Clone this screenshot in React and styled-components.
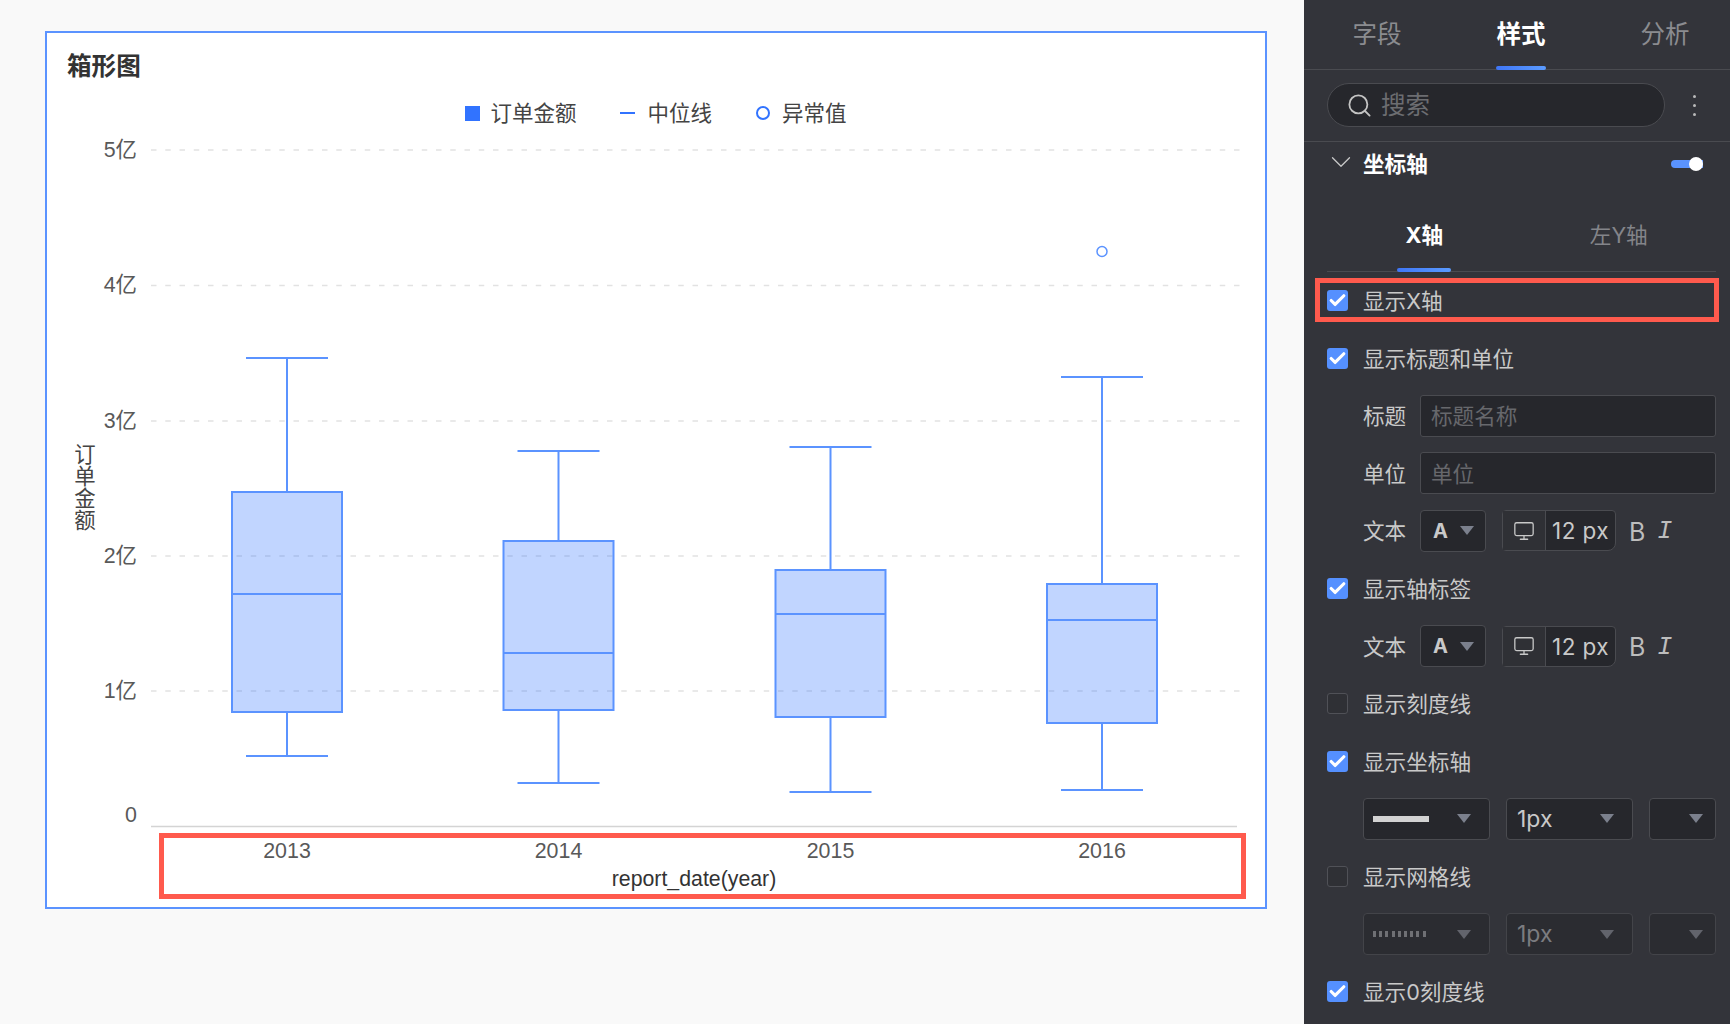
import React from "react";
import styled, { createGlobalStyle } from "styled-components";
import { Search, ChevronDown, Monitor, Check } from "lucide-react";

const FONT = `"Liberation Sans", "Noto Sans CJK SC", sans-serif`;
const UI_FONT = `Inter, "Noto Sans CJK SC", sans-serif`;

const GlobalStyle = createGlobalStyle`
  html, body { margin: 0; padding: 0; background: #f9f9f9; }
  * { box-sizing: border-box; }
`;

const Page = styled.div`
  display: flex;
  width: 1730px;
  height: 1024px;
  overflow: hidden;
  font-family: ${UI_FONT};
`;

const Main = styled.main`
  flex: 1;
  padding: 31px 37px 0 45px;
`;

// chart card
const Card = styled.section`
  position: relative;
  display: flex;
  flex-direction: column;
  height: 878px;
  background: #fff;
  border: 2px solid #5b93ff;
  font-family: ${FONT};
`;

const CardTitle = styled.h1`
  margin: 21px 0 0 20px;
  font-size: 24.6px;
  line-height: 26px;
  font-weight: 700;
  color: #333;
`;

const Legend = styled.div`
  display: flex;
  justify-content: center;
  align-items: center;
  height: 24px;
  margin-top: 21px;
  font-size: 21.5px;
  color: #444;
`;

const LegendItem = styled.div`
  display: flex;
  align-items: center;
  gap: ${(p) => p.$inner || 12}px;
  margin-right: ${(p) => p.$gap || 0}px;

  span {
    padding-bottom: 3px;
  }
`;

const LegendSquare = styled.i`
  width: 15px;
  height: 15px;
  background: #3173ff;
`;

const LegendDash = styled.i`
  width: 15px;
  height: 2px;
  background: #3173ff;
`;

const LegendCircle = styled.i`
  width: 14px;
  height: 14px;
  border: 2px solid #3173ff;
  border-radius: 50%;
`;

const ChartSvg = styled.svg`
  display: block;
  width: 1218px;
  height: 782px;
  font-family: ${FONT};
`;

const RedBox = styled.div`
  position: absolute;
  left: 112px;
  top: 800px;
  width: 1087px;
  height: 66px;
  border: 5px solid #ff5a4d;
`;

// settings panel
const Panel = styled.aside`
  width: 426px;
  height: 1024px;
  background: #33343a;
  color: #c9c9c9;
  font-size: 21.6px;
  overflow: hidden;
`;

const TopTabs = styled.nav`
  display: grid;
  grid-template-columns: repeat(3, 144px);
  height: 70px;
  padding-left: 1px;
  border-bottom: 1px solid #4a4b50;
`;

const TopTab = styled.div`
  position: relative;
  display: flex;
  justify-content: center;
  padding-top: 19px;
  font-size: 24.5px;
  line-height: 30px;
  font-weight: ${(p) => (p.$active ? 600 : 400)};
  color: ${(p) => (p.$active ? "#fff" : "#8b8c90")};

  ${(p) =>
    p.$active &&
    `&::after {
      content: "";
      position: absolute;
      left: 47px;
      bottom: -1px;
      width: 50px;
      height: 4px;
      border-radius: 2px;
      background: linear-gradient(90deg, #3f76f6, #5b9bff);
    }`}
`;

const SearchRow = styled.div`
  display: flex;
  align-items: center;
  height: 72px;
  padding: 0 0 1px 23px;
  border-bottom: 1px solid #4a4b50;
`;

const SearchBox = styled.div`
  display: flex;
  align-items: center;
  gap: 8px;
  width: 338px;
  height: 44px;
  padding-left: 18px;
  background: #26272c;
  border: 1px solid #4a4b50;
  border-radius: 22px;
  font-size: 24.5px;
  color: #6c6d71;

  span {
    padding-bottom: 3px;
  }
`;

const MoreDots = styled.div`
  display: flex;
  flex-direction: column;
  gap: 6px;
  margin-left: 28px;
`;

const Dot = styled.i`
  width: 3px;
  height: 3px;
  border-radius: 50%;
  background: #b9b9b9;
`;

const SectionHead = styled.div`
  display: flex;
  align-items: center;
  height: 44px;
  padding-left: 19.5px;
  color: #fff;
  font-weight: 600;
`;

const SectionChevron = styled(ChevronDown)`
  margin-bottom: 4px;
  color: #c9c9c9;
`;

const SectionTitle = styled.span`
  margin-left: 5.5px;
  padding-bottom: 4px;
  flex: 1;
`;

const Toggle = styled.div`
  position: relative;
  width: 32px;
  height: 8px;
  margin-right: 27px;
  border-radius: 4px 0 0 4px;
  background: #5a93ff;

  &::after {
    content: "";
    position: absolute;
    right: 0;
    top: -3px;
    width: 14px;
    height: 14px;
    border-radius: 50%;
    background: #fff;
  }
`;

const SubTabs = styled.div`
  display: grid;
  grid-template-columns: 1fr 1fr;
  height: 86px;
  width: 389px;
  margin-left: 23px;
  border-bottom: 1px solid #4a4b50;
`;

const SubTab = styled.div`
  position: relative;
  display: flex;
  justify-content: center;
  padding-top: 35px;
  line-height: 28px;
  font-weight: ${(p) => (p.$active ? 700 : 400)};
  color: ${(p) => (p.$active ? "#fff" : "#84858a")};

  ${(p) =>
    p.$active &&
    `&::after {
      content: "";
      position: absolute;
      left: 70px;
      bottom: -1px;
      width: 54px;
      height: 4px;
      border-radius: 2px;
      background: linear-gradient(90deg, #3f76f6, #5b9bff);
    }`}
`;

const Options = styled.div`
  display: flex;
  flex-direction: column;
  gap: 15.6px;
  padding: 7.5px 14px 0 23px;
`;

const OptionRow = styled.div`
  position: relative;
  display: flex;
  align-items: center;
  height: 42px;
  flex-shrink: 0;
  padding-left: ${(p) => p.$indent || 0}px;
`;

const Highlight = styled.div`
  position: absolute;
  left: -12px;
  right: -3px;
  top: -1.5px;
  bottom: -0.5px;
  border: 5px solid #ff5a4d;
`;

const CheckMark = styled.div`
  display: flex;
  align-items: center;
  justify-content: center;
  width: 21px;
  height: 21px;
  margin-right: 15px;
  border-radius: 3px;
  background: ${(p) => (p.$on ? "#5590ff" : "#2f3035")};
  border: ${(p) => (p.$on ? "none" : "1px solid #505157")};
  color: #fff;
`;

const RowText = styled.span`
  padding-bottom: 2px;
`;

const FieldLabel = styled.span`
  width: 57px;
  flex-shrink: 0;
  padding-bottom: 2px;
`;

const TextInput = styled.div`
  display: flex;
  align-items: center;
  flex: 1;
  height: 42px;
  padding: 0 0 2px 10px;
  background: #26272c;
  border: 1px solid #4a4b50;
  border-radius: 3px;
  color: #67686c;
`;

const Select = styled.div`
  display: flex;
  align-items: center;
  justify-content: space-between;
  width: ${(p) => p.$w}px;
  height: 42px;
  padding: 0 ${(p) => p.$pr}px 0 ${(p) => p.$pl}px;
  margin-right: ${(p) => p.$mr || 0}px;
  background: ${(p) => (p.$off ? "#2b2c31" : "#26272c")};
  border: 1px solid ${(p) => (p.$off ? "#434449" : "#4a4b50")};
  border-radius: 4px;
  color: ${(p) => (p.$off ? "#7b7c80" : "#c9c9c9")};
`;

const SelectValue = styled.span`
  font-size: 23px;
`;

const Caret = styled.i`
  width: 0;
  height: 0;
  border-left: 7.5px solid transparent;
  border-right: 7.5px solid transparent;
  border-top: 9px solid ${(p) => (p.$off ? "#62646c" : "#7b808d")};
`;

const FontLetter = styled.b`
  font-size: 20px;
  font-weight: 700;
`;

const LineSwatch = styled.i`
  width: 56px;
  height: 6px;
  background: ${(p) =>
    p.$dotted
      ? "repeating-linear-gradient(90deg, #6f7074 0 3px, transparent 3px 6.2px)"
      : "#d2d2d2"};
`;

const SizeGroup = styled.div`
  display: flex;
  width: 114px;
  height: 41px;
  margin-right: 13px;
  background: #26272c;
  border: 1px solid #4a4b50;
  border-radius: 4px 4px 8px 4px;
`;

const SizeIcon = styled.div`
  display: flex;
  align-items: center;
  justify-content: center;
  width: 43px;
  background: #2f3035;
  border-right: 1px solid #4a4b50;
  color: #c9c9c9;
`;

const SizeValue = styled.div`
  flex: 1;
  display: flex;
  align-items: center;
  justify-content: center;
  font-size: 22.5px;
  letter-spacing: 0.4px;
  white-space: pre;
`;

const StyleLetter = styled.span`
  font-size: 25px;
  margin-right: 12px;
  padding-top: 2px;
  color: #bdbdbd;
`;

const ItalicLetter = styled(StyleLetter)`
  font-family: "Liberation Mono", monospace;
  font-style: italic;
`;

// page coordinates of the chart, the svg begins at (47, 125)
const ORIGIN_X = 47;
const ORIGIN_Y = 125;
const TICKS = [
  { label: "5亿", y: 150 },
  { label: "4亿", y: 285.5 },
  { label: "3亿", y: 421 },
  { label: "2亿", y: 556 },
  { label: "1亿", y: 691 },
];
const BOXES = [
  { year: 2013, x: 287, hi: 358, top: 492, mid: 594, bottom: 712, lo: 756 },
  { year: 2014, x: 558.5, hi: 451, top: 541, mid: 653, bottom: 710, lo: 783 },
  { year: 2015, x: 830.5, hi: 447, top: 570, mid: 614, bottom: 717, lo: 792 },
  { year: 2016, x: 1102, hi: 377, top: 584, mid: 620, bottom: 723, lo: 790 },
];

function BoxPlot({ box }) {
  const { x, hi, top, mid, bottom, lo, year } = box;
  return (
    <g>
      <g stroke="#5b93ff" strokeWidth="2" fill="none">
        <line x1={x - 41} x2={x + 41} y1={hi} y2={hi} />
        <line x1={x} x2={x} y1={hi} y2={top} />
        <rect x={x - 55} y={top} width={110} height={bottom - top} fill="#3173ff" fillOpacity="0.3" />
        <line x1={x - 55} x2={x + 55} y1={mid} y2={mid} />
        <line x1={x} x2={x} y1={bottom} y2={lo} />
        <line x1={x - 41} x2={x + 41} y1={lo} y2={lo} />
      </g>
      <text x={x} y={858} textAnchor="middle" fontSize="21.4" fill="#595959">
        {year}
      </text>
    </g>
  );
}

function Chart() {
  return (
    <ChartSvg viewBox={`${ORIGIN_X} ${ORIGIN_Y} 1218 782`}>
      {TICKS.map((t) => (
        <g key={t.label}>
          <line x1="151" x2="1239.5" y1={t.y} y2={t.y} stroke="#e2e2e2" strokeWidth="1.5" strokeDasharray="5.5 8.75" />
          <text x="137" y={t.y + 6.5} textAnchor="end" fontSize="21.4" fill="#595959">
            {t.label}
          </text>
        </g>
      ))}
      <text x="137" y="822" textAnchor="end" fontSize="21.4" fill="#595959">0</text>
      <line x1="151" x2="1237" y1="826.5" y2="826.5" stroke="#d4d4d4" strokeWidth="1.5" />

      {BOXES.map((b) => (
        <BoxPlot key={b.year} box={b} />
      ))}
      <circle cx="1102" cy="251.5" r="5" fill="#fff" stroke="#5b93ff" strokeWidth="1.5" />

      {["订", "单", "金", "额"].map((c, i) => (
        <text key={c} x="85" y={462 + i * 22} textAnchor="middle" fontSize="21.4" fill="#444">
          {c}
        </text>
      ))}
      <text x="694" y="886" textAnchor="middle" fontSize="21.3" fill="#333">
        report_date(year)
      </text>
    </ChartSvg>
  );
}

function CheckRow({ on = true, label, highlight }) {
  return (
    <OptionRow>
      {highlight && <Highlight />}
      <CheckMark $on={on}>{on && <Check size={19} strokeWidth={4} />}</CheckMark>
      <RowText>{label}</RowText>
    </OptionRow>
  );
}

function FontRow() {
  return (
    <OptionRow $indent={36}>
      <FieldLabel>文本</FieldLabel>
      <Select $w={66} $pl={12} $pr={11} $mr={16}>
        <FontLetter>A</FontLetter>
        <Caret />
      </Select>
      <SizeGroup>
        <SizeIcon>
          <Monitor size={22} strokeWidth={1.4} />
        </SizeIcon>
        <SizeValue>12 px</SizeValue>
      </SizeGroup>
      <StyleLetter>B</StyleLetter>
      <ItalicLetter>I</ItalicLetter>
    </OptionRow>
  );
}

function LineRow({ off, dotted }) {
  return (
    <OptionRow $indent={36}>
      <Select $w={127} $pl={9} $pr={18} $mr={16} $off={off}>
        <LineSwatch $dotted={dotted} />
        <Caret $off={off} />
      </Select>
      <Select $w={127} $pl={10} $pr={18} $mr={16} $off={off}>
        <SelectValue>1px</SelectValue>
        <Caret $off={off} />
      </Select>
      <Select $w={67} $pl={8} $pr={12} $off={off}>
        <span />
        <Caret $off={off} />
      </Select>
    </OptionRow>
  );
}

export default function App() {
  return (
    <Page>
      <GlobalStyle />
      <Main>
        <Card>
          <CardTitle>箱形图</CardTitle>
          <Legend>
            <LegendItem $gap={44} $inner={10}>
              <LegendSquare />
              <span>订单金额</span>
            </LegendItem>
            <LegendItem $gap={44}>
              <LegendDash />
              <span>中位线</span>
            </LegendItem>
            <LegendItem>
              <LegendCircle />
              <span>异常值</span>
            </LegendItem>
          </Legend>
          <Chart />
          <RedBox />
        </Card>
      </Main>

      <Panel>
        <TopTabs>
          <TopTab>字段</TopTab>
          <TopTab $active>样式</TopTab>
          <TopTab>分析</TopTab>
        </TopTabs>

        <SearchRow>
          <SearchBox>
            <Search size={27} strokeWidth={1.6} color="#c4c4c4" />
            <span>搜索</span>
          </SearchBox>
          <MoreDots>
            <Dot />
            <Dot />
            <Dot />
          </MoreDots>
        </SearchRow>

        <SectionHead>
          <SectionChevron size={34} strokeWidth={0.9} />
          <SectionTitle>坐标轴</SectionTitle>
          <Toggle />
        </SectionHead>

        <SubTabs>
          <SubTab $active>X轴</SubTab>
          <SubTab>左Y轴</SubTab>
        </SubTabs>

        <Options>
          <CheckRow label="显示X轴" highlight />
          <CheckRow label="显示标题和单位" />
          <OptionRow $indent={36}>
            <FieldLabel>标题</FieldLabel>
            <TextInput>标题名称</TextInput>
          </OptionRow>
          <OptionRow $indent={36}>
            <FieldLabel>单位</FieldLabel>
            <TextInput>单位</TextInput>
          </OptionRow>
          <FontRow />
          <CheckRow label="显示轴标签" />
          <FontRow />
          <CheckRow on={false} label="显示刻度线" />
          <CheckRow label="显示坐标轴" />
          <LineRow />
          <CheckRow on={false} label="显示网格线" />
          <LineRow off dotted />
          <CheckRow label="显示0刻度线" />
        </Options>
      </Panel>
    </Page>
  );
}
